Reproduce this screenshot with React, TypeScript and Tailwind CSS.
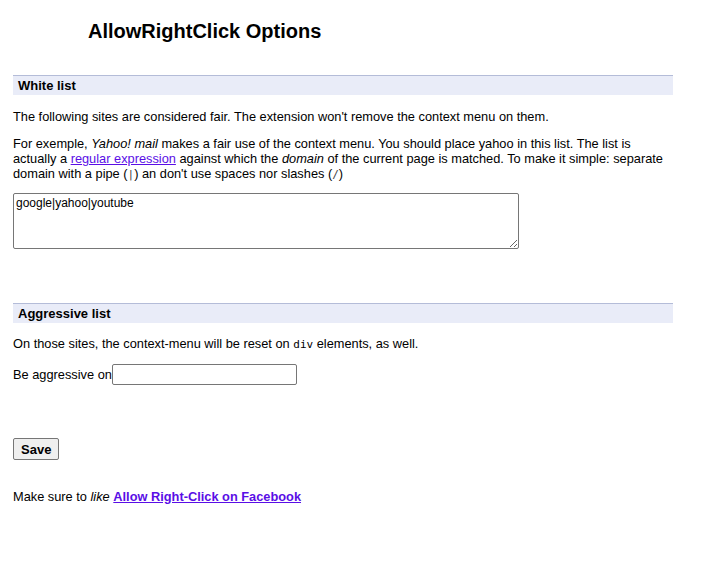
const mono = { fontFamily: '"DejaVu Sans Mono", monospace' };

export default function App() {
  return (
    <div className="min-h-[570px] bg-white px-[13px] text-[12.8px] leading-[15px] text-black" style={{ fontFamily: '"Liberation Sans", Arial, sans-serif' }}>
      <h1 className="pt-[20px] pl-[75px] text-[20px] font-bold leading-[23px]">AllowRightClick Options</h1>

      <div className="mt-[32px] w-[660px] border-t border-[#b4bcd8] bg-[#e9ecf8] px-[5px] pt-[2px] pb-[1px] text-[13px] font-bold leading-[16px]">White list</div>
      <p className="mt-[14px]">The following sites are considered fair. The extension won't remove the context menu on them.</p>
      <p className="mt-[12px] w-[660px]">
        For exemple, <i>Yahoo! mail</i> makes a fair use of the context menu. You should place yahoo in this list. The list is actually a{' '}
        <a href="#" className="text-[#5a0ee6] underline">regular expression</a> against which the <i>domain</i> of the current page is matched. To make it simple: separate domain with a pipe (<code className="text-[11px] text-[#444]" style={mono}>|</code>) an don't use spaces nor slashes (<code className="text-[11px] text-[#444]" style={mono}>/</code>)
      </p>
      <textarea
        className="mt-[11px] block h-[56px] w-[506px] resize-y rounded-[2px] border border-[#767676] px-[2px] py-[2px] text-[12px] leading-[14px]"
        style={{ fontFamily: '"Liberation Sans", Arial, sans-serif' }}
        defaultValue="google|yahoo|youtube"
      />

      <div className="mt-[54px] w-[660px] border-t border-[#b4bcd8] bg-[#e9ecf8] px-[5px] pt-[2px] pb-[1px] text-[13px] font-bold leading-[16px]">Aggressive list</div>
      <p className="mt-[13px]">
        On those sites, the context-menu will be reset on <code className="text-[11px]" style={mono}>div</code> elements, as well.
      </p>
      <div className="mt-[12px] flex items-center">
        <span>Be aggressive on</span>
        <input className="h-[21px] w-[185px] rounded-[2px] border border-[#767676] px-[2px] text-[13px]" />
      </div>

      <button className="mt-[53px] block h-[22px] rounded-[2px] border border-[#767676] bg-[#efefef] px-[7px] text-[13px] font-bold leading-[15px]">Save</button>

      <p className="mt-[29px]">
        Make sure to <i>like</i>{' '}
        <a href="#" className="font-bold text-[#5a0ee6] underline">Allow Right-Click on Facebook</a>
      </p>
    </div>
  );
}
